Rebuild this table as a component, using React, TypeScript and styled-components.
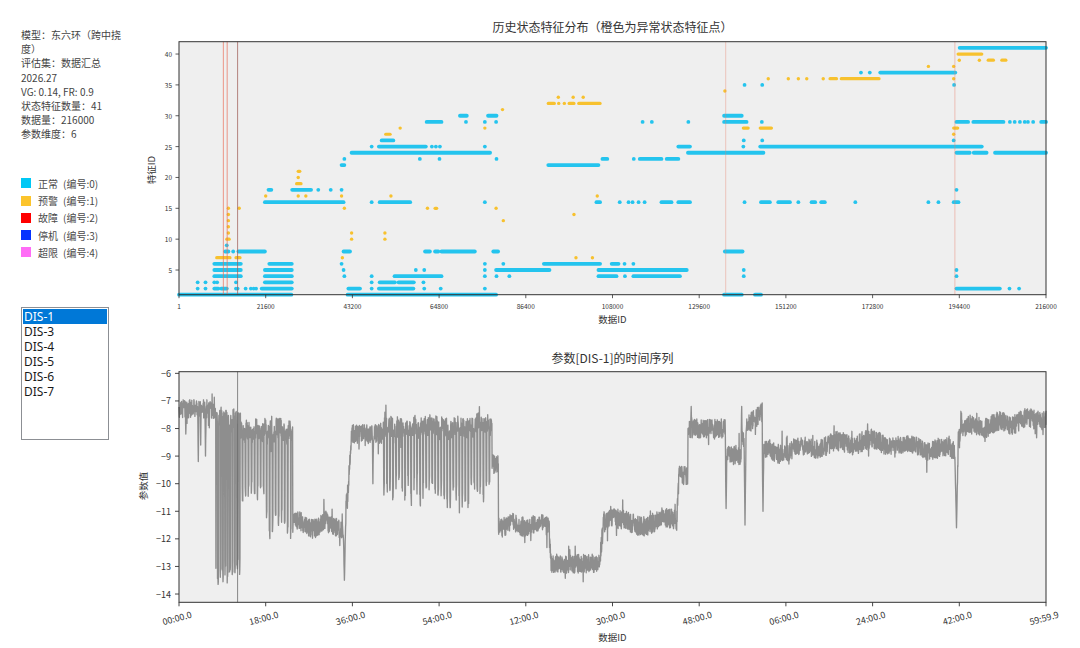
import React from "react";
import styled, { createGlobalStyle } from "styled-components";

const NORMAL = "#24c4ee";
const WARN = "#f7c12e";

// plot geometry (svg coords)
const PL = 49;
const PW = 867;
const K_MAX = 216;
const xk = (k: number) => PL + (k / K_MAX) * PW;

const TOP = { pt: 4.7, pb: 257.7, vmin: 1, vmax: 42 };
const yTop = (v: number) => TOP.pb - ((v - TOP.vmin) / (TOP.vmax - TOP.vmin)) * (TOP.pb - TOP.pt);

const BOT = { pt: 3.7, pb: 234.3, vmax: -5.94, vmin: -14.3 };
const yBot = (v: number) => BOT.pt + ((BOT.vmax - v) / (BOT.vmax - BOT.vmin)) * (BOT.pb - BOT.pt);

type Run = number | [number, number];

const normalRows: [number, Run[]][] = [
  [1, [[0, 28], [42, 79], [135.8, 140.2], [143.5, 145]]],
  [2, [4.65, 6.6, [8.8, 9.8], [10.5, 11.9], 14.2, 14.6, 16.6, 17.9, 18.6, 19.2, [20.6, 28.1], [42.2, 45.1], 48, [49.8, 58.4], 61.1, 65.2, 76.2, [193.7, 204.5], 206.9, 209.3]],
  [3, [4.65, 6.6, 8.8, 9.5, 14.2, [21.4, 28.1], 48, [50, 53.8], [54.7, 58.5], 60.9]],
  [4, [[8.8, 15.4], [21.4, 28.1], 41.2, 48, [53.7, 65.4], 76.2, 79.1, 82.3, [104.5, 109], 111.1, [113.2, 124.8], 140.7, 193.7]],
  [5, [[8.8, 15.4], [21.4, 28.1], 41, 59, 61.1, 76.2, [79, 92.3], [104.5, 126.5], 140.7, 193.7]],
  [6, [[8.8, 15.4], [22.5, 28.1], 40.5, 76.2, 80.8, [90.9, 104.9], [107.8, 109.5], 111, 113.2]],
  [8, [[11.5, 12.3], 13.5, [14.8, 21.4], [41, 42.6], [61.3, 62.5], [63.8, 64.6], [65.4, 73.7], [78.3, 79.5], [136, 140.4]]],
  [9, [11.9]],
  [16, [[21.4, 41], 48, [50, 57.6], 76.2, [104, 104.9], 109.8, 112, 113, 114.5, 116, [120.2, 122.7], [124.4, 127.3], 140.9, [145, 147.2], [149.3, 152.2], 154.3, [157.6, 158.5], [160, 160.9], 168.5, 186.7, 189.2, [193, 194.2]]],
  [18, [[22.3, 23], [28.2, 32.9], 34.7, 37.8, 40.5, 193.7]],
  [22, [[40.5, 41.2], [92, 104.5]]],
  [23, [41.2, 60, 64.9, 79.1, [105.5, 106.7], 113.3, [114.8, 120.2], [121.5, 124.4]]],
  [24, [[43, 77.5], [126.8, 145.6], [193.7, 197], [198, 201.2], [203.3, 216]]],
  [25, [48, [49.8, 61.5], 63, 64, 65, 76.2, [124.4, 127.3], 140.6, [144.8, 200]]],
  [26, [[50.5, 53.4], 140.7, 145.3, 193]],
  [29, [[61.7, 65.4], 71.5, 76.2, 79, 115.5, 117.8, 126.9, [135.8, 141.4], 145.2, [193.7, 196.6], [197.9, 205.4], 207, 208.2, 209.5, 210.7, 211.5, 212.8, [214.8, 216]]],
  [30, [[70, 71.7], [77, 79.1], [135.8, 140.2]]],
  [35, [140.9, 145.3, 193.1]],
  [37, [169.9, 172.1, [174.7, 193.4]]],
  [41, [[194.5, 216]]],
];

const warnRows: [number, Run[]][] = [
  [7, [[9.4, 12.7], [14.2, 15.2], 40.7, 98.9, 103]],
  [10, [[11.9, 12.5], 43, 51.3]],
  [11, [12.3, 43, 51.3]],
  [12, [12.3]],
  [13, [12.3, 80.8]],
  [14, [12.3, 98.4]],
  [15, [12.3, 15, 41.2, 61.9, [63.8, 64.2], 79]],
  [17, [21.6, 29.7, 31.6, 40.5, 52.8, 104.2]],
  [19, [[29.3, 30.4]]],
  [20, [29.7]],
  [21, [[29.7, 30.1]]],
  [27, [[51.5, 52.6], 193]],
  [28, [55.1, 76.2, [140.6, 141.8], [144.8, 147.6], [193, 194]]],
  [31, [80.6]],
  [32, [[92, 93.5], 94.6, 96, [97.2, 98.4], [99.6, 104.9]]],
  [33, [94.5, 98.2, 100.7]],
  [34, [136]],
  [36, [146.8, 151.8, 154.3, 156.4, 160.5, [162.2, 163.8], [165, 174.4], 193]],
  [38, [186.7, 193]],
  [39, [194.4, 199.4, [201.6, 202.9], [205, 206]]],
  [40, [[194.1, 200]]],
];

// anomaly markers on the top chart
const markers = [
  { k: 11.05, color: "rgba(232,110,90,0.7)" },
  { k: 12.0, color: "rgba(232,110,90,0.7)" },
  { k: 14.6, color: "rgba(160,95,90,0.75)" },
  { k: 136.2, color: "rgba(230,130,110,0.4)" },
  { k: 193.3, color: "rgba(230,130,110,0.45)" },
];

function mulberry32(seed: number) {
  let a = seed;
  return () => {
    a |= 0;
    a = (a + 0x6d2b79f5) | 0;
    let t = Math.imul(a ^ (a >>> 15), 1 | a);
    t = (t + Math.imul(t ^ (t >>> 7), 61 | t)) ^ t;
    return ((t ^ (t >>> 14)) >>> 0) / 4294967296;
  };
}

const lerp = (a: number, b: number, t: number) => a + (b - a) * Math.min(1, Math.max(0, t));
const span = (k: number, k0: number, k1: number, a: number, b: number) => lerp(a, b, (k - k0) / (k1 - k0));
// stable pseudo random per index, so every finger of a burst gets its own depth
const hash = (i: number) => {
  const s = Math.sin(i * 12.9898) * 43758.5453;
  return s - Math.floor(s);
};

const spikes: [number, number, number][] = [
  [1.7, 0.12, -8.2],
  [4.8, 0.15, -9.2],
  [5.4, 0.1, -8.6],
  [6.6, 0.15, -9.0],
  [41.2, 0.35, -13.5],
  [48.3, 0.15, -10.0],
  [127.6, 0.12, -7.2],
  [136.3, 0.2, -10.9],
  [140.2, 0.12, -7.2],
  [141.0, 0.25, -11.5],
  [145.5, 0.2, -11.0],
  [193.7, 0.45, -11.6],
];

function burst(k: number, period: number, duty: number, low: number, depth: number, high: number) {
  const idx = Math.floor(k / period);
  const phase = (k % period) / period;
  return phase < duty ? low - hash(idx) * depth : high - hash(idx + 500) * 0.35;
}

function baseAt(k: number): number {
  if (k < 9.2) return -7.3;
  if (k < 15.3) return burst(k, 0.6, 0.35, -12.7, 0.8, -7.5);
  if (k < 28.3) return burst(k, 0.75, 0.25, k < 21.8 ? -9.9 : -10.9, 0.8, -7.9);
  if (k < 41) return -11.5 + 0.15 * Math.sin(k * 0.9);
  if (k < 41.6) return -11.3;
  if (k < 42.2) return span(k, 41.6, 42.2, -10.7, -10.2);
  if (k < 43) return span(k, 42.2, 43, -9.8, -8.3);
  if (k < 50.6) return -8.2;
  if (k < 78) return burst(k, 0.75, 0.25, -9.8, 0.9, span(k, 50.6, 78, -7.9, -7.6));
  if (k < 79.6) return -9.3;
  if (k < 92.2) return -11.5 + 0.1 * Math.sin(k);
  if (k < 92.7) return span(k, 92.2, 92.7, -11.6, -12.9);
  if (k < 105) return -12.9;
  if (k < 106) return span(k, 105, 106, -12.5, -11.1);
  if (k < 124) return -11.4 + 0.15 * Math.sin((k - 106) * 0.5);
  if (k < 124.6) return span(k, 124, 124.6, -11.3, -9.7);
  if (k < 126.8) return -9.7;
  if (k < 136.2) return -8.0;
  if (k < 140.1) return -8.96;
  if (k < 141.3) return -8.3;
  if (k < 145.3) return span(k, 141.3, 145.3, -7.9, -7.4);
  if (k < 170) return span(k, 145.3, 170, -8.9, -8.45) + 0.12 * Math.sin(k * 0.7);
  if (k < 193.3) return span(k, 170, 193.3, -8.45, -8.8) + 0.12 * Math.sin(k * 0.7);
  if (k < 195) return span(k, 193.3, 195, -8.8, -8.0);
  return span(k, 195, 216, -8.0, -7.6) + 0.1 * Math.sin(k * 0.9);
}

function buildSeries(): string {
  const r = mulberry32(20260227);
  const n = 4320;
  const parts: string[] = [];
  for (let i = 0; i <= n; i++) {
    const k = (i / n) * K_MAX;
    let v = baseAt(k) + (r() - 0.5) * 0.7;
    if (r() < 0.05) v += (r() - 0.5) * 1.1;
    for (const [c, w, target] of spikes) {
      const d = Math.abs(k - c);
      if (d < w) v = lerp(v, target, 1 - d / w);
    }
    parts.push(`${i === 0 ? "M" : "L"}${xk(k).toFixed(1)} ${yBot(v).toFixed(1)}`);
  }
  return parts.join("");
}

const seriesPath = buildSeries();

const xTopTicks = ["1", "21600", "43200", "64800", "86400", "108000", "129600", "151200", "172800", "194400", "216000"];
const xBotTicks = ["00:00.0", "18:00.0", "36:00.0", "54:00.0", "12:00.0", "30:00.0", "48:00.0", "06:00.0", "24:00.0", "42:00.0", "59:59.9"];

const legendItems = [
  { color: "#00c8f5", name: "正常", code: "(编号:0)" },
  { color: "#fcc42c", name: "预警", code: "(编号:1)" },
  { color: "#ff0000", name: "故障", code: "(编号:2)" },
  { color: "#0533ff", name: "停机", code: "(编号:3)" },
  { color: "#ff6cf6", name: "超限", code: "(编号:4)" },
];

const infoLines = [
  "模型：东六环（跨中挠",
  "度）",
  "评估集：数据汇总",
  "2026.27",
  "VG: 0.14, FR: 0.9",
  "状态特征数量：41",
  "数据量：216000",
  "参数维度：6",
];

const params = ["DIS-1", "DIS-3", "DIS-4", "DIS-5", "DIS-6", "DIS-7"];

function ScatterRows({ rows, color, r, w }: { rows: [number, Run[]][]; color: string; r: number; w: number }) {
  return (
    <g>
      {rows.map(([v, runs]) =>
        runs.map((run, i) =>
          Array.isArray(run) ? (
            <line
              key={`${v}-${i}`}
              x1={xk(run[0])}
              x2={xk(run[1])}
              y1={yTop(v)}
              y2={yTop(v)}
              stroke={color}
              strokeWidth={w}
              strokeLinecap="round"
            />
          ) : (
            <circle key={`${v}-${i}`} cx={xk(run)} cy={yTop(v)} r={r} fill={color} />
          )
        )
      )}
    </g>
  );
}

function StateChart() {
  return (
    <ChartSvg width={930} height={300}>
      <rect x={PL} y={TOP.pt} width={PW} height={TOP.pb - TOP.pt} fill="#efefef" />
      <ScatterRows rows={normalRows} color={NORMAL} r={1.9} w={3.8} />
      <ScatterRows rows={warnRows} color={WARN} r={1.7} w={3.2} />
      {markers.map((m) => (
        <line key={m.k} x1={xk(m.k)} x2={xk(m.k)} y1={TOP.pt} y2={TOP.pb} stroke={m.color} strokeWidth={1} />
      ))}
      <rect x={PL} y={TOP.pt} width={PW} height={TOP.pb - TOP.pt} fill="none" stroke="#333" strokeWidth={1} />
      {[5, 10, 15, 20, 25, 30, 35, 40].map((v) => (
        <g key={v}>
          <line x1={PL - 3.5} x2={PL} y1={yTop(v)} y2={yTop(v)} stroke="#333" strokeWidth={0.8} />
          <TickText $size={6.5} x={PL - 7} y={yTop(v)} textAnchor="end" dominantBaseline="central">
            {v}
          </TickText>
        </g>
      ))}
      {xTopTicks.map((t, i) => {
        const x = xk(i * 21.6);
        return (
          <g key={t}>
            <line x1={x} x2={x} y1={TOP.pb} y2={TOP.pb + 3.5} stroke="#333" strokeWidth={0.8} />
            <TickText $size={6.5} x={x} y={TOP.pb + 11.5} textAnchor="middle" dominantBaseline="central">
              {t}
            </TickText>
          </g>
        );
      })}
      <AxisText x={PL + PW / 2} y={282} textAnchor="middle" dominantBaseline="central">
        数据ID
      </AxisText>
      <AxisText x={21} y={133} textAnchor="middle" dominantBaseline="central" transform="rotate(-90 21 133)">
        特征ID
      </AxisText>
    </ChartSvg>
  );
}

function SeriesChart() {
  return (
    <ChartSvg width={930} height={280}>
      <rect x={PL} y={BOT.pt} width={PW} height={BOT.pb - BOT.pt} fill="#efefef" />
      <path d={seriesPath} fill="none" stroke="#8e8e8e" strokeWidth={1.35} strokeLinejoin="round" />
      <line x1={xk(14.6)} x2={xk(14.6)} y1={BOT.pt} y2={BOT.pb} stroke="#6a6a6a" strokeWidth={0.8} />
      <rect x={PL} y={BOT.pt} width={PW} height={BOT.pb - BOT.pt} fill="none" stroke="#333" strokeWidth={1} />
      {[-6, -7, -8, -9, -10, -11, -12, -13, -14].map((v) => (
        <g key={v}>
          <line x1={PL - 4} x2={PL} y1={yBot(v)} y2={yBot(v)} stroke="#333" strokeWidth={0.9} />
          <TickText $size={9} x={PL - 8} y={yBot(v)} textAnchor="end" dominantBaseline="central">
            {`\u2212${Math.abs(v)}`}
          </TickText>
        </g>
      ))}
      {xBotTicks.map((t, i) => {
        const x = xk(i * 21.6);
        const y = 250;
        return (
          <g key={t}>
            <line x1={x} x2={x} y1={BOT.pb} y2={BOT.pb + 4} stroke="#333" strokeWidth={0.9} />
            <TickText
              $size={9}
              x={x - 2}
              y={y}
              textAnchor="middle"
              dominantBaseline="central"
              transform={`rotate(-15 ${x - 2} ${y})`}
            >
              {t}
            </TickText>
          </g>
        );
      })}
      <AxisText x={PL + PW / 2} y={268.5} textAnchor="middle" dominantBaseline="central">
        数据ID
      </AxisText>
      <AxisText x={12.5} y={118} textAnchor="middle" dominantBaseline="central" transform="rotate(-90 12.5 118)">
        参数值
      </AxisText>
    </ChartSvg>
  );
}

export default function App() {
  return (
    <>
      <GlobalStyle />
      <Page>
        <Sidebar>
          <InfoBlock>
            {infoLines.map((l) => (
              <InfoLine key={l}>{l}</InfoLine>
            ))}
          </InfoBlock>
          <Legend>
            {legendItems.map((it) => (
              <LegendItem key={it.name}>
                <Swatch $color={it.color} />
                <LegendName>{it.name}</LegendName>
                <span>{it.code}</span>
              </LegendItem>
            ))}
          </Legend>
          <ListBox>
            {params.map((p, i) => (
              <ListItem key={p} $selected={i === 0}>
                {p}
              </ListItem>
            ))}
          </ListBox>
        </Sidebar>
        <Main>
          <FigureTitle $gap={0}>历史状态特征分布（橙色为异常状态特征点）</FigureTitle>
          <StateChart />
          <FigureTitle $gap={11}>参数[DIS-1]的时间序列</FigureTitle>
          <SeriesChart />
        </Main>
      </Page>
    </>
  );
}

const GlobalStyle = createGlobalStyle`
  html, body {
    margin: 0;
    padding: 0;
    background: #ffffff;
  }
  body {
    font-family: "Noto Sans CJK SC", "Noto Sans", sans-serif;
    color: #333333;
  }
`;

const Page = styled.div`
  display: flex;
  width: 1080px;
  height: 648px;
  overflow: hidden;
`;

const Sidebar = styled.div`
  width: 130px;
  box-sizing: border-box;
  padding: 28px 0 0 21px;
  display: flex;
  flex-direction: column;
`;

const InfoBlock = styled.div`
  display: flex;
  flex-direction: column;
`;

const InfoLine = styled.div`
  font-size: 10px;
  line-height: 14.2px;
  color: #444444;
  white-space: nowrap;
`;

const Legend = styled.div`
  margin-top: 33px;
  display: flex;
  flex-direction: column;
`;

const LegendItem = styled.div`
  display: flex;
  align-items: center;
  height: 17.3px;
  font-size: 10px;
  color: #4a4a4a;
`;

const LegendName = styled.span`
  margin-right: 5px;
`;

const Swatch = styled.span<{ $color: string }>`
  width: 10px;
  height: 10px;
  margin-right: 7px;
  background: ${(p) => p.$color};
`;

const ListBox = styled.div`
  margin-top: 46px;
  width: 88px;
  height: 133px;
  box-sizing: border-box;
  border: 1px solid #8c8f94;
  padding: 1px;
  background: #ffffff;
`;

const ListItem = styled.div<{ $selected?: boolean }>`
  height: 15px;
  line-height: 15px;
  padding-left: 1px;
  font-family: "Noto Sans", "Open Sans", sans-serif;
  font-size: 12px;
  color: ${(p) => (p.$selected ? "#ffffff" : "#1a1a1a")};
  background: ${(p) => (p.$selected ? "#0078d7" : "transparent")};
`;

const Main = styled.div`
  width: 930px;
  padding-top: 17px;
  display: flex;
  flex-direction: column;
`;

const FigureTitle = styled.div<{ $gap: number }>`
  margin: ${(p) => p.$gap}px 0 0 ${PL}px;
  width: ${PW}px;
  height: 20px;
  line-height: 20px;
  text-align: center;
  font-size: 12px;
  color: #333333;
`;

const ChartSvg = styled.svg`
  display: block;
  font-family: "Noto Sans CJK SC", sans-serif;
`;

const TickText = styled.text<{ $size: number }>`
  font-size: ${(p) => p.$size}px;
  fill: #333333;
`;

const AxisText = styled.text`
  font-size: 9.5px;
  fill: #333333;
`;
